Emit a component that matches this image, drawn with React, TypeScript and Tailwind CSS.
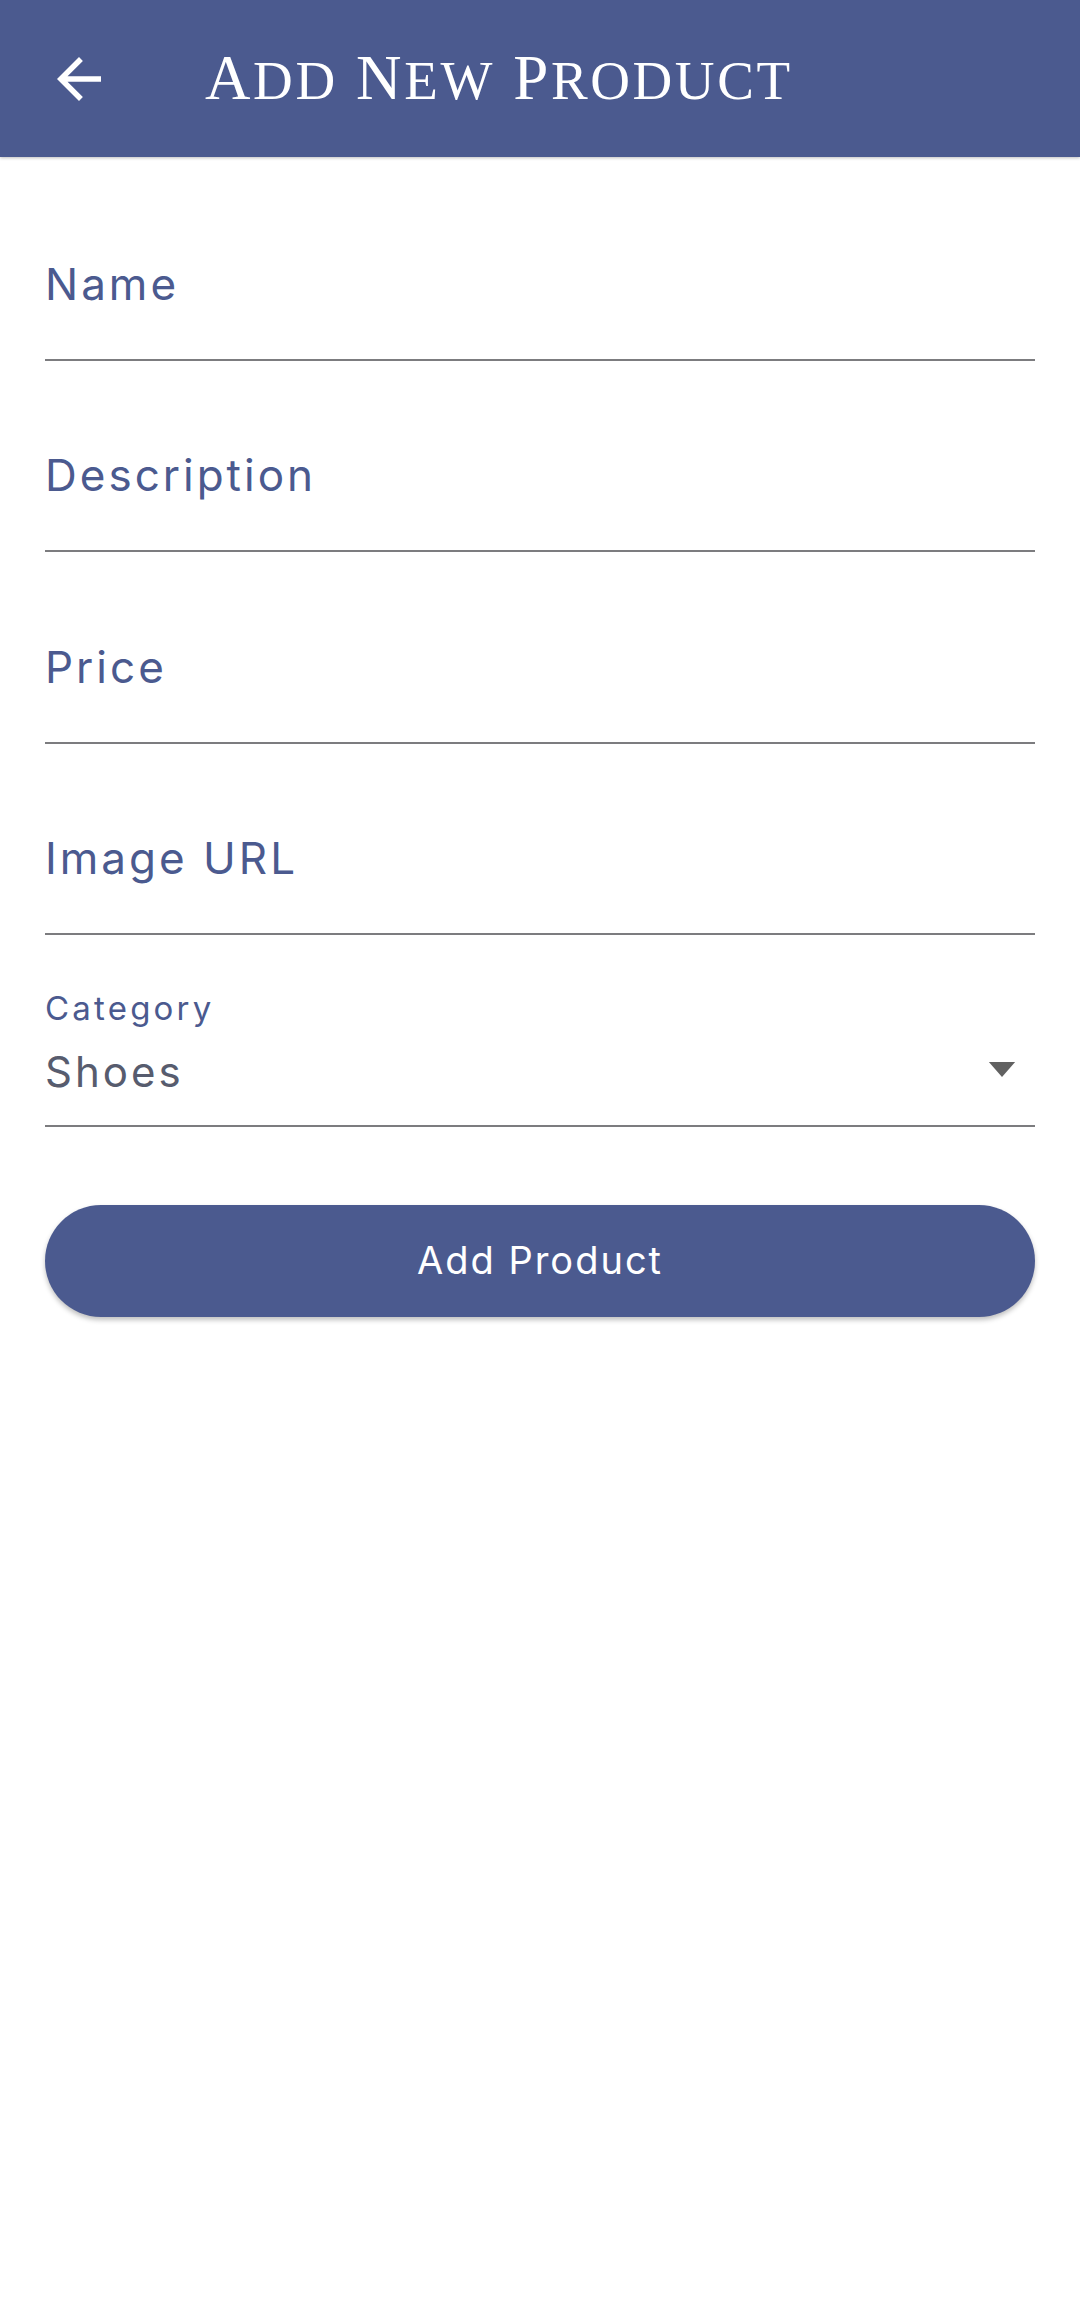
import React from "react";

const fields = ["Name", "Description", "Price", "Image URL"];

const App: React.FC = () => {
  return (
    <div className="min-h-screen w-full bg-white" style={{ fontFamily: "Inter, 'Open Sans', sans-serif" }}>
      {/* App bar */}
      <header className="h-[157px] bg-[#4b5a8f] flex items-center shadow-[0_1px_3px_rgba(0,0,0,0.25)] relative z-10">
        <button className="ml-[46px] w-[66px] h-[66px] flex items-center justify-center text-white">
          <svg viewBox="0 0 24 24" className="w-[66px] h-[66px]" fill="currentColor">
            <path d="M20 11H7.83l5.59-5.59L12 4l-8 8 8 8 1.41-1.41L7.83 13H20v-2z" />
          </svg>
        </button>
        <h1
          className="ml-[93px] text-white text-[63px] leading-none tracking-[2.6px]"
          style={{ fontFamily: "'Liberation Serif', 'DejaVu Serif', serif" }}
        >
          A<span className="text-[55px]">DD</span> N<span className="text-[55px]">EW</span> P
          <span className="text-[55px]">RODUCT</span>
        </h1>
      </header>

      {/* Form */}
      <main className="px-[45px] pt-[12px]">
        {fields.map((label) => (
          <div key={label} className="h-[191.5px] border-b-2 border-[#7c7c7f] flex items-end pb-[53px]">
            <span className="text-[44px] leading-none text-[#4b5a8f] tracking-[3px]">{label}</span>
          </div>
        ))}

        <div className="h-[191.5px] border-b-2 border-[#7c7c7f] flex flex-col justify-end pb-[32px]">
          <span className="text-[33px] leading-none text-[#4b5a8f] tracking-[3.2px] mb-[26px]">Category</span>
          <div className="flex items-center justify-between">
            <span className="text-[42px] leading-none text-[#575c6e] tracking-[3px]">Shoes</span>
            <svg viewBox="0 0 28 16" className="w-[28px] h-[15px] mr-[19px] mt-[-4px]" fill="#616161">
              <path d="M0 0h28L14 16z" />
            </svg>
          </div>
        </div>

        <button className="mt-[78px] w-full h-[112px] rounded-full bg-[#4b5a8f] text-white text-[38px] tracking-[2px] shadow-[0_3px_5px_rgba(0,0,0,0.25)]">
          Add Product
        </button>
      </main>
    </div>
  );
};

export default App;
